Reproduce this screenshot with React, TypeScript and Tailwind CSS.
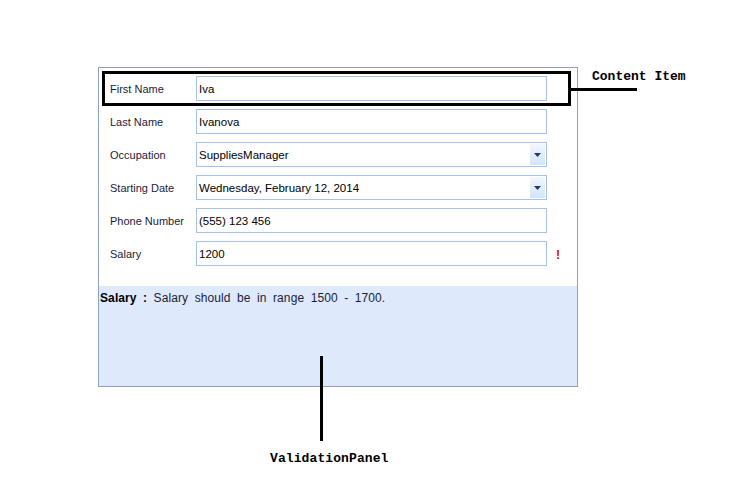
import React from "react";

const rows = [
  { label: "First Name", value: "Iva" },
  { label: "Last Name", value: "Ivanova" },
  { label: "Occupation", value: "SuppliesManager", dropdown: true },
  { label: "Starting Date", value: "Wednesday, February 12, 2014", dropdown: true },
  { label: "Phone Number", value: "(555) 123 456" },
  { label: "Salary", value: "1200", error: true },
];

const DropButton = () => (
  <div className="absolute right-[1px] top-[1px] bottom-[1px] w-[15px] flex items-center justify-center bg-gradient-to-b from-[#f3f7fd] to-[#d3e3fa]">
    <svg width="7" height="4" viewBox="0 0 7 4">
      <path d="M0 0h7L3.5 4z" fill="#1f3a6e" />
    </svg>
  </div>
);

export default function App() {
  return (
    <div className="relative w-[737px] h-[485px] bg-white overflow-hidden font-['Liberation_Sans',Arial,sans-serif]">
      <div className="ml-[98px] pt-[67px]">
        <div className="w-[480px] h-[320px] border border-[#8ea3c4] flex flex-col bg-white">
          <div className="flex flex-col gap-[8px] pt-[8px] pl-[11px]">
            {rows.map((r) => (
              <div key={r.label} className="flex items-center h-[25px]">
                <span className="w-[86px] pt-[2px] text-[11px] text-[#1c1c3a]">{r.label}</span>
                <div className="relative w-[351px] h-[25px] border border-[#a6c2e8] bg-white flex items-center pl-[2px] pt-[2px] text-[11.5px] text-black">
                  {r.value}
                  {r.dropdown && <DropButton />}
                </div>
                {r.error && (
                  <span className="ml-[9px] pt-[2px] text-[12px] font-bold text-[#d40000] leading-none">!</span>
                )}
              </div>
            ))}
          </div>
          <div className="mt-[20px] flex-1 bg-[#deeafc] pl-[1px] pt-[3px] text-[12px] text-[#1c1c3a] tracking-[0.1px] [word-spacing:3px]">
            <span className="font-bold text-black">Salary :</span> Salary should be in range 1500 - 1700.
          </div>
        </div>
      </div>

      {/* annotations */}
      <div className="absolute left-[102px] top-[71px] w-[469px] h-[35px] border-[3px] border-black" />
      <div className="absolute left-[570px] top-[88px] w-[67px] h-[3px] bg-black" />
      <span className="absolute left-[592px] top-[67px] text-[13px] font-bold text-black font-['Liberation_Mono',monospace]">
        Content Item
      </span>
      <div className="absolute left-[320px] top-[356px] w-[3px] h-[85px] bg-black" />
      <span className="absolute left-[270px] top-[449px] text-[13px] font-bold text-black font-['Liberation_Mono',monospace] tracking-[0.1px]">
        ValidationPanel
      </span>
    </div>
  );
}
